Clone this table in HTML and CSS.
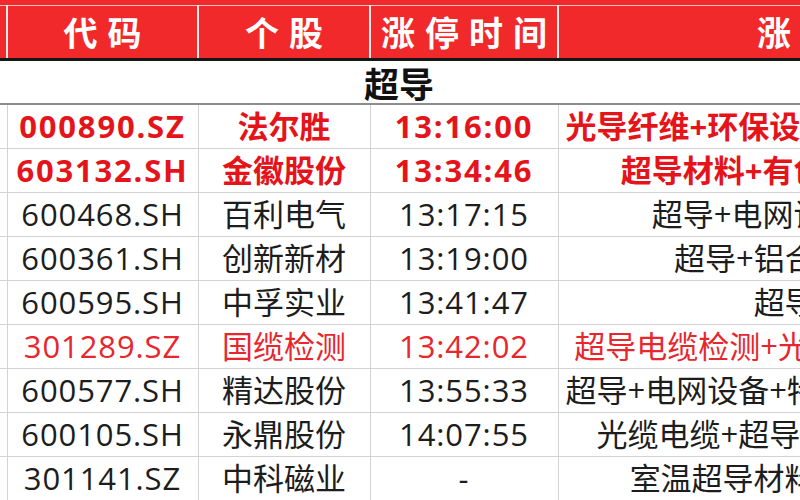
FILE: index.html
```html
<!DOCTYPE html>
<html lang="zh-CN">
<head>
<meta charset="utf-8">
<title>超导 涨停个股</title>
<link rel="stylesheet" href="styles.css">
</head>
<body>
<div class="sheet">
  <table class="grid">
    <colgroup>
      <col class="c-idx"><col class="c-code"><col class="c-name"><col class="c-time"><col class="c-reason">
    </colgroup>
    <thead>
      <tr>
        <th class="idx">序号</th>
        <th>代码</th>
        <th>个股</th>
        <th>涨停时间</th>
        <th>涨停原因</th>
      </tr>
    </thead>
    <tbody>
      <tr class="section"><td colspan="5">超导</td></tr>
      <tr class="hot"><td></td><td class="num">000890.SZ</td><td>法尔胜</td><td class="num">13:16:00</td><td>光导纤维+环保设备+超导电缆+江苏国企</td></tr>
      <tr class="hot"><td></td><td class="num">603132.SH</td><td>金徽股份</td><td class="num">13:34:46</td><td>超导材料+有色金属+高端铜材料</td></tr>
      <tr><td></td><td class="num">600468.SH</td><td>百利电气</td><td class="num">13:17:15</td><td>超导+电网设备+特高压电器</td></tr>
      <tr><td></td><td class="num">600361.SH</td><td>创新新材</td><td class="num">13:19:00</td><td>超导+铝合金+光伏+储能</td></tr>
      <tr><td></td><td class="num">600595.SH</td><td>中孚实业</td><td class="num">13:41:47</td><td>超导+电解铝</td></tr>
      <tr class="alert"><td></td><td class="num">301289.SZ</td><td>国缆检测</td><td class="num">13:42:02</td><td>超导电缆检测+光纤光缆检测+新股上市</td></tr>
      <tr><td></td><td class="num">600577.SH</td><td>精达股份</td><td class="num">13:55:33</td><td>超导+电网设备+特种电磁线+新能源汽车</td></tr>
      <tr><td></td><td class="num">600105.SH</td><td>永鼎股份</td><td class="num">14:07:55</td><td>光缆电缆+超导+海上风电+高压电缆</td></tr>
      <tr class="last"><td></td><td class="num">301141.SZ</td><td>中科磁业</td><td class="num">-</td><td>室温超导材料+软磁及稀土永磁</td></tr>
    </tbody>
  </table>
</div>
</body>
</html>
```

FILE: styles.css
```css
html, body {
  margin: 0;
  padding: 0;
  background: #ffffff;
}

body {
  width: 800px;
  height: 500px;
  overflow: hidden;
}

.sheet {
  width: 800px;
  overflow: hidden;
  border-top: 5px solid #f2292b;
}

.grid {
  border-collapse: collapse;
  table-layout: fixed;
  width: 1215px;
  margin-left: -94px;
  font-family: "Open Sans", "Noto Sans CJK SC", sans-serif;
}

.c-idx { width: 100px; }
.c-code { width: 191px; }
.c-name { width: 172px; }
.c-time { width: 188px; }
.c-reason { width: 564px; }

th {
  background: #f2292b;
  color: #ffffff;
  height: 52px;
  padding: 0 0 0 10px;
  font-family: "Noto Sans CJK SC", sans-serif;
  font-size: 34px;
  font-weight: 700;
  letter-spacing: 10px;
  line-height: 1;
  white-space: nowrap;
  overflow: hidden;
  border-top: 1px solid #f9c2c2;
  border-left: 2px solid #fbeaea;
  border-right: 2px solid #fbeaea;
  border-bottom: 3px solid #161616;
}

th.idx {
  text-align: right;
  padding: 0 5px 0 0;
  letter-spacing: 0;
}

td {
  height: 43px;
  padding: 0;
  text-align: center;
  vertical-align: middle;
  font-size: 31px;
  line-height: 1;
  color: #1d1d1d;
  white-space: nowrap;
  overflow: hidden;
  border: 1px solid #d3d3d3;
}

td.num {
  letter-spacing: 0.9px;
}

.section td {
  height: 42px;
  text-align: left;
  padding-left: 457px;
  font-family: "Noto Sans CJK SC", sans-serif;
  font-size: 35px;
  font-weight: 700;
  color: #111111;
  border-left: none;
  border-right: none;
  border-bottom: 2px solid #8d8d8d;
}

.hot td {
  color: #e5141b;
  font-weight: 700;
}

.hot td.num {
  letter-spacing: 1.8px;
}

.alert td {
  color: #e8262e;
}

.last td {
  border-bottom: 3px solid #7a7a7a;
}
```
